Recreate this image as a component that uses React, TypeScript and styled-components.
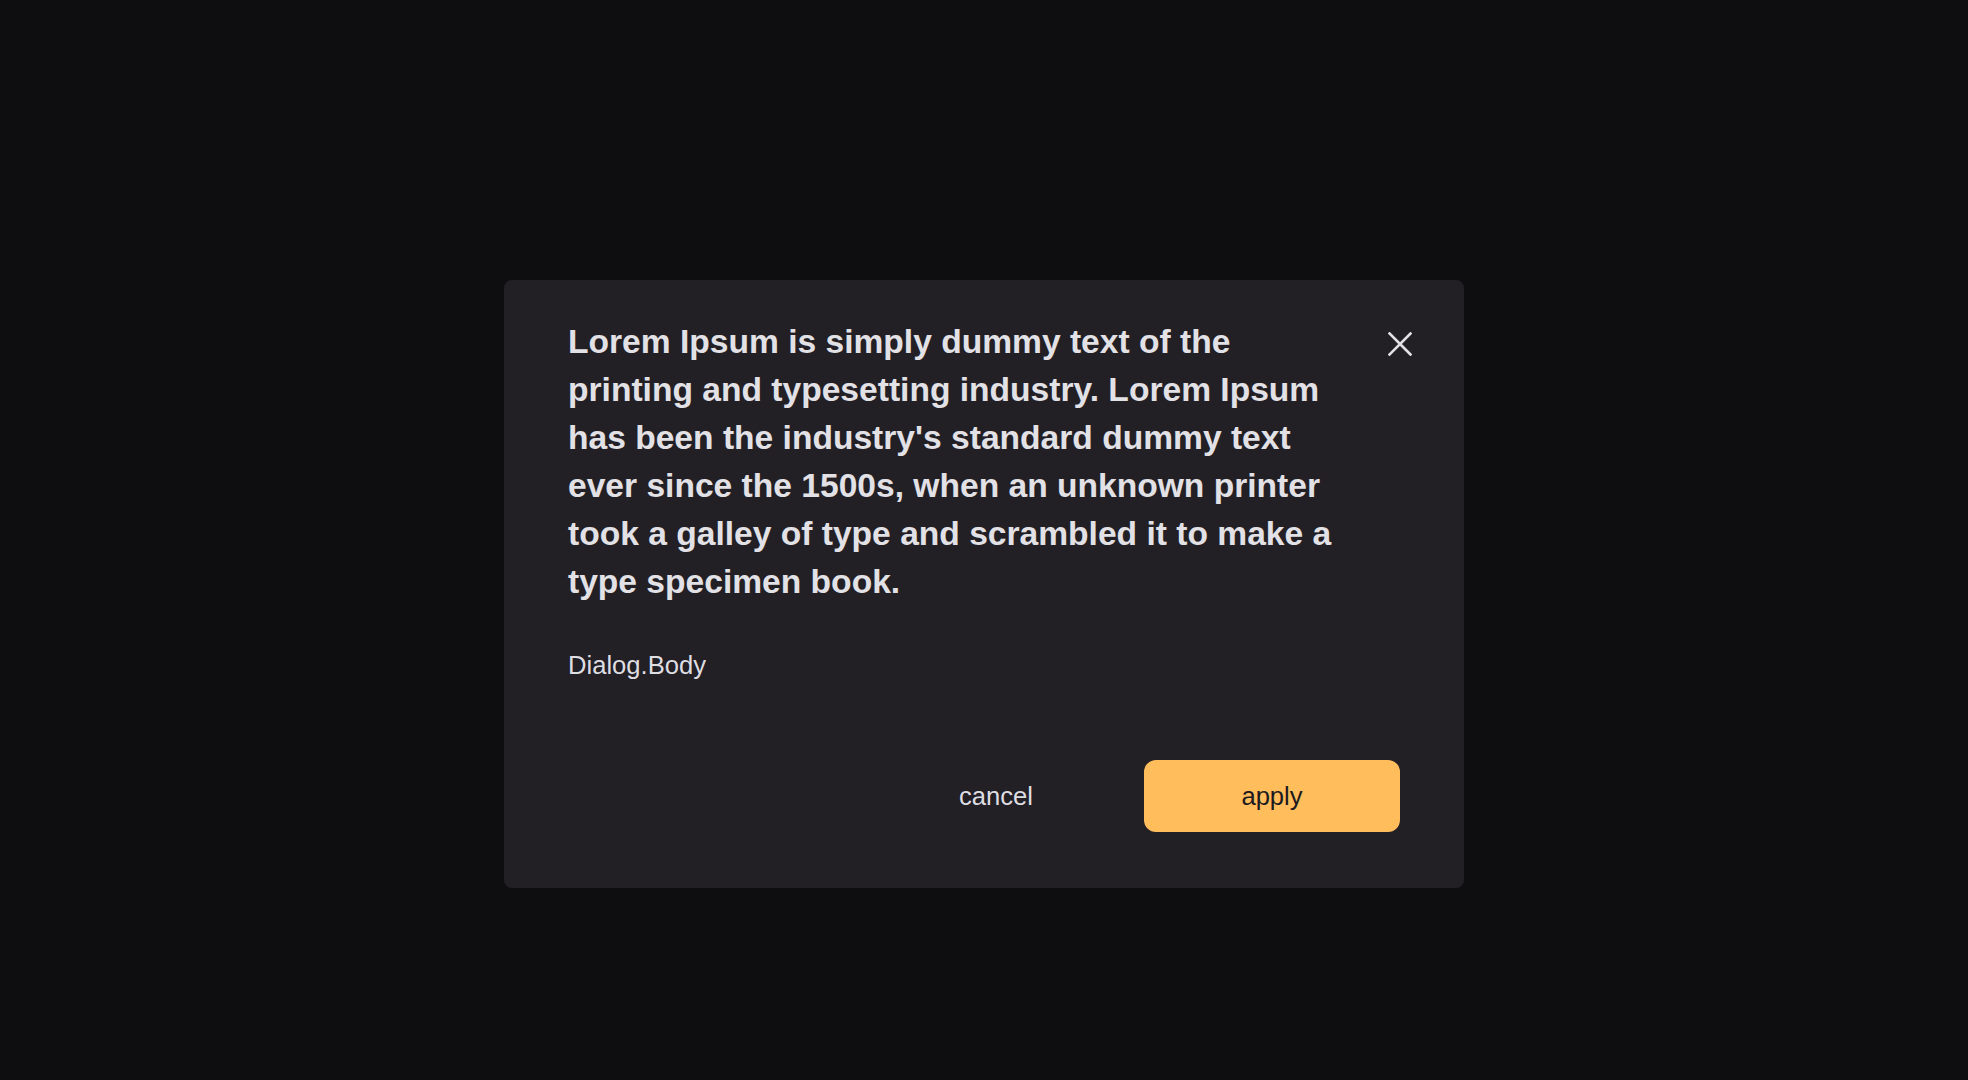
import styled, { createGlobalStyle } from 'styled-components';

const GlobalStyle = createGlobalStyle`
  html, body {
    margin: 0;
    padding: 0;
    background: #0e0d10;
  }
  body {
    font-family: 'Liberation Sans', Arial, sans-serif;
  }
`;

function CloseIcon() {
  return (
    <svg width='24' height='24' viewBox='0 0 24 24' fill='none'>
      <path d='M1.5 1.5L22.5 22.5M22.5 1.5L1.5 22.5' stroke='#e2e1e5' strokeWidth='2.6' strokeLinecap='square' />
    </svg>
  );
}

function App() {
  return (
    <Backdrop>
      <GlobalStyle />
      <Dialog role='dialog'>
        <Header>
          <Title>
            Lorem Ipsum is simply dummy text of the printing and typesetting industry. Lorem Ipsum has been the
            industry's standard dummy text ever since the 1500s, when an unknown printer took a galley of type and
            scrambled it to make a type specimen book.
          </Title>
          <CloseButton aria-label='close'>
            <CloseIcon />
          </CloseButton>
        </Header>
        <Body>Dialog.Body</Body>
        <Footer>
          <Button>cancel</Button>
          <Button $primary>apply</Button>
        </Footer>
      </Dialog>
    </Backdrop>
  );
}

const Backdrop = styled.div`
  min-height: 100vh;
  box-sizing: border-box;
  padding-top: 280px;
  display: flex;
  justify-content: center;
  align-items: flex-start;
  background: #0e0d10;
`;

const Dialog = styled.div`
  width: 960px;
  box-sizing: border-box;
  padding: 38px 64px 56px 64px;
  background: #221f25;
  border-radius: 8px;
  display: flex;
  flex-direction: column;
`;

const Header = styled.div`
  display: flex;
  align-items: flex-start;
  gap: 24px;
`;

const Title = styled.h2`
  flex: 1;
  margin: 0;
  font-size: 33.6px;
  line-height: 48px;
  font-weight: 700;
  color: #e2e1e5;
`;

const CloseButton = styled.button`
  flex: none;
  width: 48px;
  height: 48px;
  margin-top: 2px;
  margin-right: -24px;
  padding: 0;
  border: none;
  background: transparent;
  display: flex;
  align-items: center;
  justify-content: center;
  cursor: pointer;
`;

const Body = styled.div`
  margin-top: 40px;
  font-size: 25.6px;
  line-height: 38.4px;
  color: #dedde1;
`;

const Footer = styled.div`
  margin-top: 76px;
  display: flex;
  justify-content: flex-end;
  gap: 20px;
`;

const Button = styled.button<{ $primary?: boolean }>`
  width: 256px;
  height: 72px;
  border: none;
  border-radius: 12px;
  font-family: 'Liberation Sans', Arial, sans-serif;
  font-size: 25.6px;
  cursor: pointer;
  background: ${(p) => (p.$primary ? '#ffbd5c' : 'transparent')};
  color: ${(p) => (p.$primary ? '#1c1a1e' : '#dedde1')};
`;

export default App;
